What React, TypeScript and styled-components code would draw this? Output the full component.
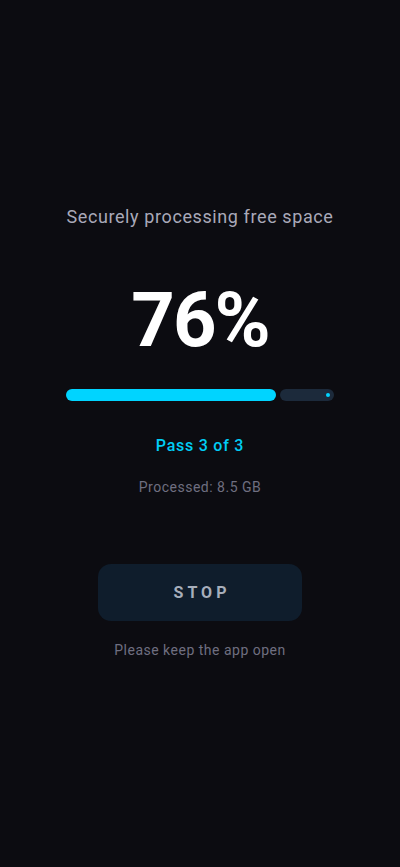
import React from "react";
import styled, { createGlobalStyle } from "styled-components";

const Global = createGlobalStyle`
  html, body { margin: 0; padding: 0; background: #0c0c11; }
  body { font-family: Roboto, "Noto Sans", sans-serif; -webkit-font-smoothing: antialiased; }
`;

const Screen = styled.div`
  min-height: 867px;
  background: #0c0c11;
  display: flex;
  flex-direction: column;
  align-items: center;
  padding-top: 205px;
  box-sizing: border-box;
`;

const Title = styled.div`
  font-size: 18px;
  line-height: 24px;
  letter-spacing: 0.6px;
  color: #a9a9b9;
  font-weight: 400;
`;

const Percent = styled.div`
  margin-top: 53px;
  font-family: Roboto, sans-serif;
  font-weight: 700;
  font-size: 76px;
  line-height: 76px;
  letter-spacing: -2px;
  color: #ffffff;
`;

const Bar = styled.div`
  margin-top: 31px;
  width: 268px;
  height: 12px;
  display: flex;
  gap: 4px;
`;

const Fill = styled.div`
  height: 100%;
  border-radius: 6px;
  background: #00d4ff;
`;

const Track = styled.div`
  flex: 1;
  height: 100%;
  border-radius: 6px;
  background: #1c2a3b;
  display: flex;
  align-items: center;
  justify-content: flex-end;
  padding-right: 4px;
`;

const StopDot = styled.div`
  width: 4px;
  height: 4px;
  border-radius: 50%;
  background: #00d4ff;
`;

const Pass = styled.div`
  margin-top: 35px;
  font-size: 16px;
  line-height: 20px;
  font-weight: 500;
  letter-spacing: 0.75px;
  color: #00cdf5;
`;

const Processed = styled.div`
  margin-top: 22px;
  font-size: 14px;
  line-height: 18px;
  letter-spacing: 0.5px;
  color: #6f6f80;
`;

const StopButton = styled.button`
  margin-top: 68px;
  width: 204px;
  height: 57px;
  border: none;
  border-radius: 13px;
  background: #0f1d2c;
  color: #a7aebb;
  font-family: Roboto, sans-serif;
  font-size: 16px;
  font-weight: 700;
  letter-spacing: 4px;
  padding: 0 0 0 4px;
  cursor: pointer;
`;

const Note = styled.div`
  margin-top: 20px;
  font-size: 14px;
  line-height: 18px;
  letter-spacing: 0.5px;
  color: #6f6f80;
`;

export default function App() {
  const fillWidth = 210;
  return (
    <>
      <Global />
      <Screen>
        <Title>Securely processing free space</Title>
        <Percent>76%</Percent>
        <Bar>
          <Fill style={{ width: fillWidth }} />
          <Track>
            <StopDot />
          </Track>
        </Bar>
        <Pass>Pass 3 of 3</Pass>
        <Processed>Processed: 8.5 GB</Processed>
        <StopButton>STOP</StopButton>
        <Note>Please keep the app open</Note>
      </Screen>
    </>
  );
}
